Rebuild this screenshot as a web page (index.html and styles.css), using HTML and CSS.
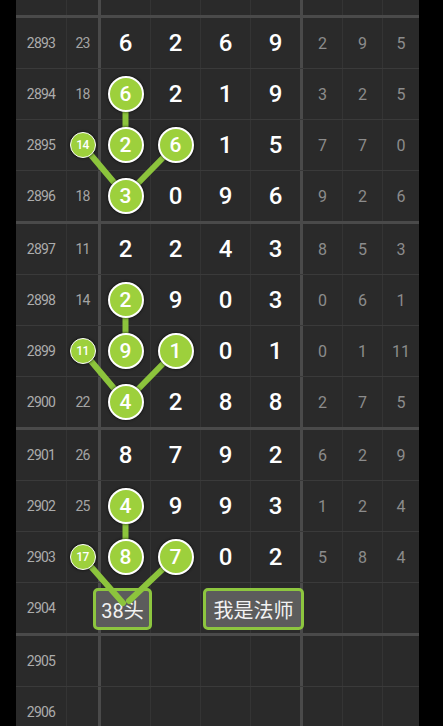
FILE: index.html
```html
<!DOCTYPE html>
<html lang="zh-CN">
<head>
  <meta charset="UTF-8" />
  <title>走势图</title>
  <link rel="stylesheet" href="styles.css">
</head>
<body>
  <div class="board">
    <div class="row top end">
      <span></span><span class="sum"></span><span></span><span></span><span></span><span class="d4"></span><span></span><span></span><span></span>
    </div>

    <div class="row">
      <span class="issue">2893</span><span class="sum">23</span>
      <span class="num">6</span><span class="num">2</span><span class="num">6</span><span class="num d4">9</span>
      <span class="sub">2</span><span class="sub">9</span><span class="sub">5</span>
    </div>
    <div class="row">
      <span class="issue">2894</span><span class="sum">18</span>
      <span class="num"><b class="ball">6</b></span><span class="num">2</span><span class="num">1</span><span class="num d4">9</span>
      <span class="sub">3</span><span class="sub">2</span><span class="sub">5</span>
    </div>
    <div class="row">
      <span class="issue">2895</span><span class="sum"><b class="ball mini">14</b></span>
      <span class="num"><b class="ball">2</b></span><span class="num"><b class="ball">6</b></span><span class="num">1</span><span class="num d4">5</span>
      <span class="sub">7</span><span class="sub">7</span><span class="sub">0</span>
    </div>
    <div class="row end">
      <span class="issue">2896</span><span class="sum">18</span>
      <span class="num"><b class="ball">3</b></span><span class="num">0</span><span class="num">9</span><span class="num d4">6</span>
      <span class="sub">9</span><span class="sub">2</span><span class="sub">6</span>
    </div>

    <div class="row">
      <span class="issue">2897</span><span class="sum">11</span>
      <span class="num">2</span><span class="num">2</span><span class="num">4</span><span class="num d4">3</span>
      <span class="sub">8</span><span class="sub">5</span><span class="sub">3</span>
    </div>
    <div class="row">
      <span class="issue">2898</span><span class="sum">14</span>
      <span class="num"><b class="ball">2</b></span><span class="num">9</span><span class="num">0</span><span class="num d4">3</span>
      <span class="sub">0</span><span class="sub">6</span><span class="sub">1</span>
    </div>
    <div class="row">
      <span class="issue">2899</span><span class="sum"><b class="ball mini">11</b></span>
      <span class="num"><b class="ball">9</b></span><span class="num"><b class="ball">1</b></span><span class="num">0</span><span class="num d4">1</span>
      <span class="sub">0</span><span class="sub">1</span><span class="sub">11</span>
    </div>
    <div class="row end">
      <span class="issue">2900</span><span class="sum">22</span>
      <span class="num"><b class="ball">4</b></span><span class="num">2</span><span class="num">8</span><span class="num d4">8</span>
      <span class="sub">2</span><span class="sub">7</span><span class="sub">5</span>
    </div>

    <div class="row">
      <span class="issue">2901</span><span class="sum">26</span>
      <span class="num">8</span><span class="num">7</span><span class="num">9</span><span class="num d4">2</span>
      <span class="sub">6</span><span class="sub">2</span><span class="sub">9</span>
    </div>
    <div class="row">
      <span class="issue">2902</span><span class="sum">25</span>
      <span class="num"><b class="ball">4</b></span><span class="num">9</span><span class="num">9</span><span class="num d4">3</span>
      <span class="sub">1</span><span class="sub">2</span><span class="sub">4</span>
    </div>
    <div class="row">
      <span class="issue">2903</span><span class="sum"><b class="ball mini">17</b></span>
      <span class="num"><b class="ball">8</b></span><span class="num"><b class="ball">7</b></span><span class="num">0</span><span class="num d4">2</span>
      <span class="sub">5</span><span class="sub">8</span><span class="sub">4</span>
    </div>
    <div class="row end">
      <span class="issue">2904</span><span class="sum"></span>
      <span class="num"></span><span class="num"></span><span class="num"></span><span class="num d4"></span>
      <span class="sub"></span><span class="sub"></span><span class="sub"></span>
    </div>

    <div class="row">
      <span class="issue">2905</span><span class="sum"></span>
      <span class="num"></span><span class="num"></span><span class="num"></span><span class="num d4"></span>
      <span class="sub"></span><span class="sub"></span><span class="sub"></span>
    </div>
    <div class="row">
      <span class="issue">2906</span><span class="sum"></span>
      <span class="num"></span><span class="num"></span><span class="num"></span><span class="num d4"></span>
      <span class="sub"></span><span class="sub"></span><span class="sub"></span>
    </div>

    <!-- 连线 -->
    <svg class="links" width="403" height="726" viewBox="0 0 403 726">
      <g stroke="#8cc43c" stroke-width="6" stroke-linecap="round" fill="none">
        <path d="M109.5 94 V145 M66.5 145 L109.5 196 M159.5 145 L109.5 196" />
        <path d="M109.5 300 V351 M66.5 351 L109.5 402 M159.5 351 L109.5 402" />
        <path d="M109.5 506 V557 M66.5 557 L107 603 M159.5 557 L113 601" />
      </g>
    </svg>

    <div class="tag tag-head">38头</div>
    <div class="tag tag-mage">我是法师</div>
  </div>
</body>
</html>
```

FILE: styles.css
```css
* {
  box-sizing: border-box;
}

body {
  margin: 0;
  background-color: #000;
  font-family: Roboto, "Noto Sans CJK SC", sans-serif;
  overflow: hidden;
}

.board {
  position: relative;
  width: 403px;
  height: 726px;
  margin-left: 16px;
  background-color: #2a2a2a;
  overflow: hidden;
}

.row {
  display: grid;
  grid-template-columns: 51px 34px 50px 50px 50px 52px 40px 40px 36px;
  height: 51px;
  border-bottom: 1px solid #3a3a3a;
}

.row.end {
  height: 53px;
  border-bottom: 3px solid #4a4a4a;
}

.row.top {
  height: 18px;
}

.row > span {
  display: flex;
  align-items: center;
  justify-content: center;
  border-right: 1px solid #343434;
}

.row > span:last-child {
  border-right: none;
}

.row > .sum,
.row > .d4 {
  border-right: 3px solid #4a4a4a;
}

.issue {
  color: #acacac;
  font-size: 14px;
  letter-spacing: -0.8px;
}

.sum {
  color: #a4a4a4;
  font-size: 14px;
  letter-spacing: -0.8px;
}

.num {
  color: #fff;
  font-size: 24px;
  font-weight: 500;
}

.sub {
  color: #8c8c8c;
  font-size: 16px;
}

.ball {
  position: relative;
  z-index: 3;
  display: flex;
  align-items: center;
  justify-content: center;
  width: 36px;
  height: 36px;
  border-radius: 50%;
  border: 2px solid #fff;
  background-color: #9dd03c;
  color: #fff;
  font-size: 21px;
  font-weight: 500;
  box-shadow: 0 0 3px rgba(0, 0, 0, 0.8);
}

.ball.mini {
  width: 26px;
  height: 26px;
  border-width: 1.5px;
  font-size: 12px;
  letter-spacing: -0.5px;
}

.links {
  position: absolute;
  left: 0;
  top: 0;
  z-index: 2;
  pointer-events: none;
}

.tag {
  position: absolute;
  top: 588px;
  height: 42px;
  z-index: 1;
  display: flex;
  align-items: center;
  justify-content: center;
  background-color: #5c5c5c;
  border: 3px solid #8dc63f;
  border-radius: 5px;
  color: #f2f2f2;
  font-size: 20px;
}

.tag-head {
  left: 77px;
  width: 59px;
}

.tag-mage {
  left: 187px;
  width: 101px;
}
```
